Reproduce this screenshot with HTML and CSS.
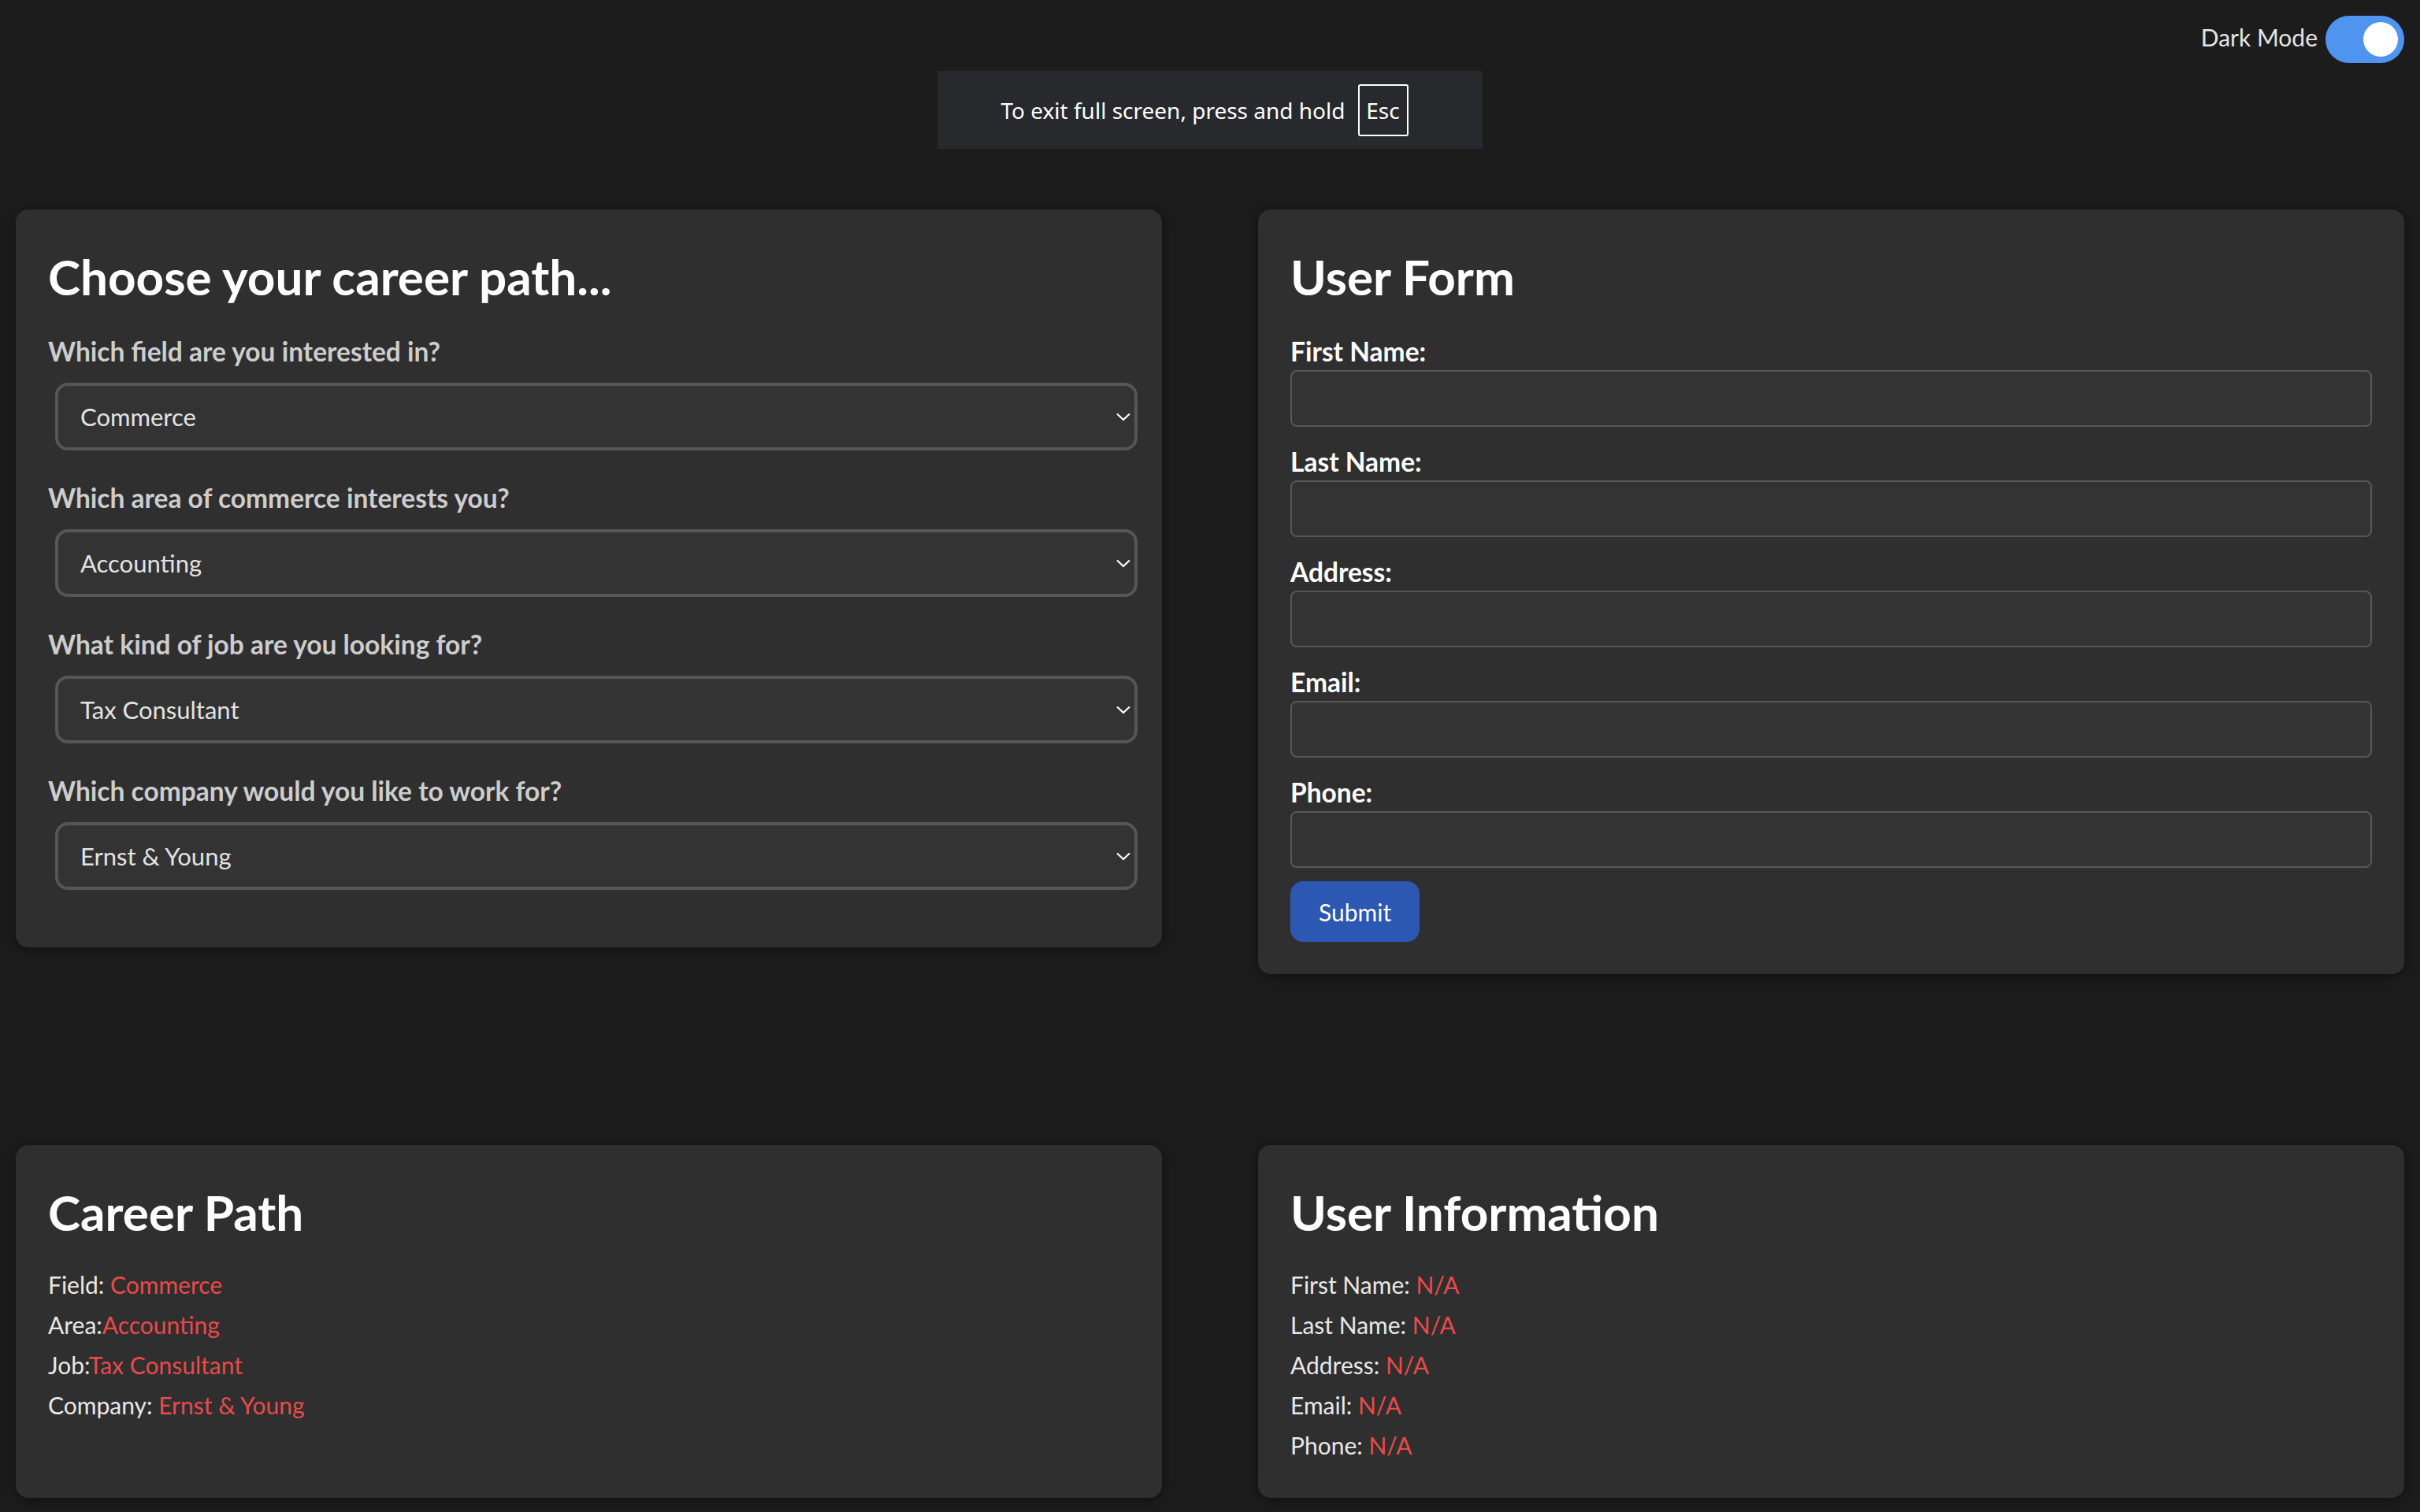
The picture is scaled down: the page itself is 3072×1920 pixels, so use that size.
FILE: index.html
```html
<!DOCTYPE html>
<html lang="en">
<head>
<meta charset="utf-8">
<title>Career Path</title>
<link rel="stylesheet" href="styles.css">
</head>
<body>
<header class="topbar">
  <span class="mode-label">Dark Mode</span>
  <span class="toggle"><span class="knob"></span></span>
</header>

<div class="fs-toast">
  <span class="fs-text">To exit full screen, press and hold</span>
  <span class="fs-key">Esc</span>
</div>

<main class="page">
  <section class="row row-top">
    <div class="card">
      <h1 class="card-title">Choose your career path...</h1>
      <div class="group">
        <div class="q-label">Which field are you interested in?</div>
        <div class="select-wrap">
          <select class="select"><option>Commerce</option></select>
          <svg class="chev" width="18" height="11" viewBox="0 0 18 11"><path d="M1 1.5 L9 9 L17 1.5" fill="none" stroke="#fff" stroke-width="2.2"/></svg>
        </div>
      </div>
      <div class="group">
        <div class="q-label">Which area of commerce interests you?</div>
        <div class="select-wrap">
          <select class="select"><option>Accounting</option></select>
          <svg class="chev" width="18" height="11" viewBox="0 0 18 11"><path d="M1 1.5 L9 9 L17 1.5" fill="none" stroke="#fff" stroke-width="2.2"/></svg>
        </div>
      </div>
      <div class="group">
        <div class="q-label">What kind of job are you looking for?</div>
        <div class="select-wrap">
          <select class="select"><option>Tax Consultant</option></select>
          <svg class="chev" width="18" height="11" viewBox="0 0 18 11"><path d="M1 1.5 L9 9 L17 1.5" fill="none" stroke="#fff" stroke-width="2.2"/></svg>
        </div>
      </div>
      <div class="group">
        <div class="q-label">Which company would you like to work for?</div>
        <div class="select-wrap">
          <select class="select"><option>Ernst &amp; Young</option></select>
          <svg class="chev" width="18" height="11" viewBox="0 0 18 11"><path d="M1 1.5 L9 9 L17 1.5" fill="none" stroke="#fff" stroke-width="2.2"/></svg>
        </div>
      </div>
    </div>

    <div class="card">
      <h1 class="card-title">User Form</h1>
      <div class="field">
        <label class="f-label">First Name:</label>
        <input class="input" type="text">
      </div>
      <div class="field">
        <label class="f-label">Last Name:</label>
        <input class="input" type="text">
      </div>
      <div class="field">
        <label class="f-label">Address:</label>
        <input class="input" type="text">
      </div>
      <div class="field">
        <label class="f-label">Email:</label>
        <input class="input" type="text">
      </div>
      <div class="field">
        <label class="f-label">Phone:</label>
        <input class="input" type="text">
      </div>
      <button class="submit" type="button">Submit</button>
    </div>
  </section>

  <section class="row row-bottom">
    <div class="card">
      <h1 class="card-title">Career Path</h1>
      <div class="info">
        <div class="info-row">Field: <span class="val">Commerce</span></div>
        <div class="info-row">Area:<span class="val">Accounting</span></div>
        <div class="info-row">Job:<span class="val">Tax Consultant</span></div>
        <div class="info-row">Company: <span class="val">Ernst &amp; Young</span></div>
      </div>
    </div>
    <div class="card">
      <h1 class="card-title">User Information</h1>
      <div class="info">
        <div class="info-row">First Name: <span class="val">N/A</span></div>
        <div class="info-row">Last Name: <span class="val">N/A</span></div>
        <div class="info-row">Address: <span class="val">N/A</span></div>
        <div class="info-row">Email: <span class="val">N/A</span></div>
        <div class="info-row">Phone: <span class="val">N/A</span></div>
      </div>
    </div>
  </section>
</main>
</body>
</html>
```
FILE: styles.css
```css
* { box-sizing: border-box; }

html, body {
  margin: 0;
  padding: 0;
}

body {
  background: #1c1c1c;
  color: #e6e6e6;
  font-family: Lato, "Open Sans", sans-serif;
  font-size: 30px;
  min-height: 1920px;
}

/* top bar */
.topbar {
  display: flex;
  justify-content: flex-end;
  align-items: center;
  gap: 10px;
  padding: 20px 20px 0;
  height: 80px;
}

.mode-label {
  font-size: 30px;
  color: #e4e4e4;
  margin-bottom: 6px;
}

.toggle {
  position: relative;
  width: 100px;
  height: 60px;
  border-radius: 30px;
  background: #4f95ef;
  display: inline-block;
}

.knob {
  position: absolute;
  right: 8px;
  top: 8px;
  width: 44px;
  height: 44px;
  border-radius: 50%;
  background: #fff;
}

/* browser full-screen notice overlay */
.fs-toast {
  position: absolute;
  top: 90px;
  left: 1190px;
  width: 692px;
  height: 99px;
  background: #28292d;
  display: flex;
  align-items: center;
  justify-content: center;
  gap: 16px;
  font-family: "Noto Sans", "Open Sans", sans-serif;
  font-size: 28px;
  color: #fff;
  padding-right: 14px;
}

.fs-key {
  width: 64px;
  height: 66px;
  border: 2px solid #fff;
  border-radius: 3px;
  display: flex;
  align-items: center;
  justify-content: center;
}

/* layout */
.page {
  padding: 0 20px;
}

.row {
  display: grid;
  grid-template-columns: 1fr 1fr;
  column-gap: 122px;
}

.row-top {
  margin-top: 186px;
  align-items: start;
}

.row-bottom {
  margin-top: 217px;
  align-items: stretch;
}

.card {
  background: #2f2f2f;
  border-radius: 16px;
  padding: 41px;
  box-shadow: 0 2px 18px rgba(0, 0, 0, 0.45);
}

.card-title {
  margin: 0;
  font-size: 62px;
  line-height: 88px;
  font-weight: 700;
  color: #fff;
}

/* career selects */
.row-top .card-title {
  margin-bottom: 31px;
}

.group {
  margin-bottom: 40px;
}

.group:last-child {
  margin-bottom: 32px;
}

.q-label {
  font-size: 33.5px;
  line-height: 40px;
  font-weight: 700;
  color: #cdcdcd;
  margin-bottom: 20px;
}

.select-wrap {
  position: relative;
  margin: 0 -10px 0 9px;
}

.select {
  display: block;
  width: 100%;
  height: 86px;
  appearance: none;
  -webkit-appearance: none;
  background: #333333;
  border: 4px solid #565656;
  border-radius: 16px;
  padding: 0 60px 0 28px;
  font-family: Lato, sans-serif;
  font-size: 31px;
  color: #e2e2e2;
  outline: none;
}

.chev {
  position: absolute;
  right: 9px;
  top: 38px;
}

/* user form */
.field {
  margin-bottom: 24px;
}

.field:last-of-type {
  margin-bottom: 17px;
}

.f-label {
  display: block;
  font-size: 33.5px;
  line-height: 40px;
  font-weight: 700;
  color: #fff;
  margin-bottom: 4px;
}

.input {
  display: block;
  width: 100%;
  height: 72px;
  background: #333333;
  border: 2px solid #575757;
  border-radius: 8px;
  outline: none;
  font-size: 30px;
  color: #fff;
  padding: 0 16px;
}

.submit {
  display: block;
  height: 77px;
  padding: 0 36px;
  border: none;
  border-radius: 16px;
  background: #2c57b2;
  color: #fff;
  font-family: Lato, sans-serif;
  font-size: 30px;
}

/* info cards */
.info {
  margin-top: 23px;
}

.info-row {
  font-size: 30px;
  line-height: 51px;
  color: #e8e8e8;
}

.val {
  color: #e94a4a;
}
```
